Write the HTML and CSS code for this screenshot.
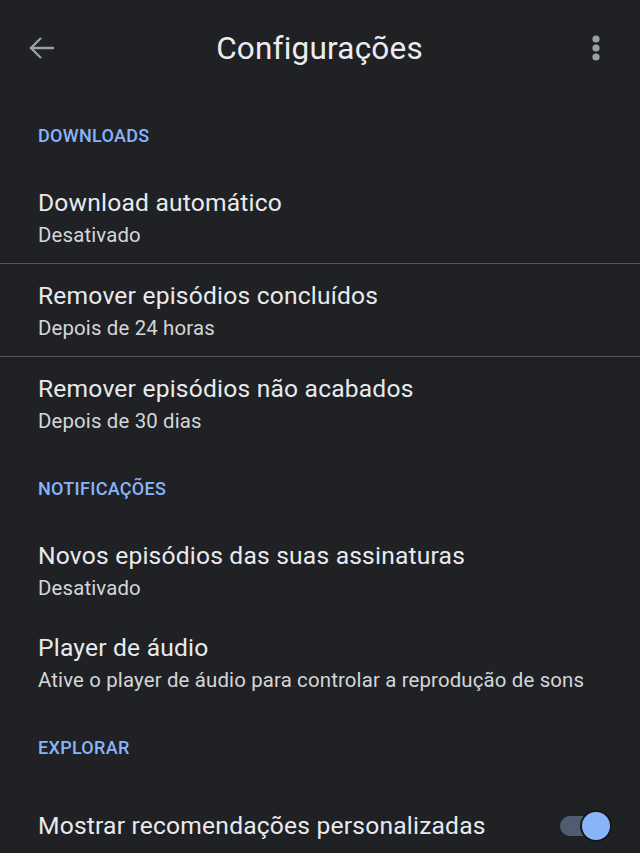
FILE: index.html
```html
<!DOCTYPE html>
<html>
<head>
    <meta charset="utf-8">
    <title>Configurações</title>
    <link rel="stylesheet" href="styles.css">
</head>
<body>
    <div class="topbar">
        <svg class="back" width="28" height="28" viewBox="0 0 28 28">
            <path d="M26 14H3M13 4L3 14l10 10" fill="none" stroke="#9aa0a6" stroke-width="2.4"/>
        </svg>
        <h1 class="title">Configurações</h1>
        <svg class="more" width="10" height="28" viewBox="0 0 10 28">
            <circle cx="5" cy="5" r="3.6" fill="#9aa0a6"/>
            <circle cx="5" cy="14" r="3.6" fill="#9aa0a6"/>
            <circle cx="5" cy="23" r="3.6" fill="#9aa0a6"/>
        </svg>
    </div>

    <div class="section">DOWNLOADS</div>
    <div class="item">
        <div class="item-title">Download automático</div>
        <div class="item-sub">Desativado</div>
    </div>
    <div class="divider"></div>
    <div class="item">
        <div class="item-title">Remover episódios concluídos</div>
        <div class="item-sub">Depois de 24 horas</div>
    </div>
    <div class="divider"></div>
    <div class="item">
        <div class="item-title">Remover episódios não acabados</div>
        <div class="item-sub">Depois de 30 dias</div>
    </div>

    <div class="section">NOTIFICAÇÕES</div>
    <div class="item">
        <div class="item-title">Novos episódios das suas assinaturas</div>
        <div class="item-sub">Desativado</div>
    </div>
    <div class="item">
        <div class="item-title">Player de áudio</div>
        <div class="item-sub">Ative o player de áudio para controlar a reprodução de sons</div>
    </div>

    <div class="section">EXPLORAR</div>
    <div class="item item-switch">
        <div class="item-title">Mostrar recomendações personalizadas</div>
        <div class="switch"><span class="knob"></span></div>
    </div>
</body>
</html>
```

FILE: styles.css
```css
*{margin: 0; padding: 0;}
body{background: #202124; color: #e8eaed; font-family: Roboto, "Noto Sans", sans-serif; overflow: hidden;}

.topbar{height: 96px; display: flex; align-items: center; padding: 0 39px 0 28px; position: relative;}
.back{display: block;}
.title{flex: 1; text-align: center; font-size: 31.5px; font-weight: 400; color: #ececee; letter-spacing: 0.2px; padding-right: 8px;}
.more{display: block;}

.section{padding: 30px 38px 25px; line-height: 20px; font-size: 18px; font-weight: 500; color: #8ab4f8; letter-spacing: 0.3px;}

.item{padding: 18px 38px 16px;}
.item-title{font-size: 24.6px; line-height: 28px; color: #e8eaed; letter-spacing: 0.2px;}
.item-sub{font-size: 20.4px; line-height: 24px; margin-top: 6px; color: #d4d6d9; letter-spacing: 0.15px;}
.divider{height: 1px; background: #55565a;}

.item-switch{display: flex; align-items: center; justify-content: space-between; padding: 29px 40px 18px 38px;}
.switch{width: 40px; height: 20px; border-radius: 10px; background: #525c70; position: relative;}
.knob{position: absolute; top: -6px; right: -12px; width: 28px; height: 28px; border-radius: 50%;
    background: #8ab4f8; border: 2px solid #16171a;}
```
